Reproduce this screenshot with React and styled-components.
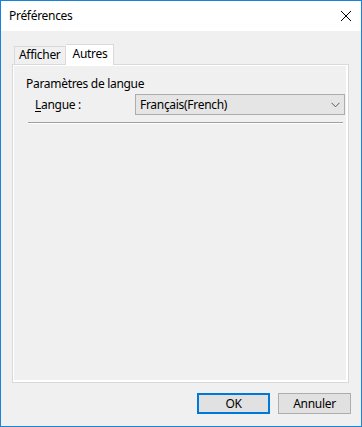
import React from "react";
import styled, { createGlobalStyle, css } from "styled-components";

const GlobalStyle = createGlobalStyle`
  html, body {
    margin: 0;
    padding: 0;
    background: #ffffff;
  }
  body {
    font-family: "Noto Sans", "Open Sans", sans-serif;
    font-size: 12px;
    letter-spacing: -0.3px;
    color: #000000;
  }
  * {
    box-sizing: border-box;
  }
`;

const Window = styled.div`
  width: 362px;
  height: 427px;
  display: flex;
  flex-direction: column;
  border: 1px solid #1883d7;
  background: #f0f0f0;
`;

const TitleBar = styled.div`
  height: 30px;
  flex: none;
  display: flex;
  align-items: center;
  justify-content: space-between;
  padding: 0 9px 1px 8px;
  background: #ffffff;
`;

const Title = styled.span`
  font-size: 12px;
  line-height: 16px;
`;

const CloseButton = styled.span`
  display: flex;
  width: 12px;
  height: 12px;
  margin-top: 1px;
`;

const Body = styled.div`
  flex: 1;
  display: flex;
  flex-direction: column;
  padding: 13px 12px 12px 11px;
`;

const TabStrip = styled.div`
  display: flex;
  align-items: flex-end;
  height: 20px;
  padding-left: 2px;
  position: relative;
  z-index: 1;
`;

const Tab = styled.div`
  height: 18px;
  padding: 0 4px;
  line-height: 16px;
  border: 1px solid #d9d9d9;
  border-bottom: none;
  background: #f0f0f0;
  ${(props) =>
    props.active &&
    css`
      height: 21px;
      margin-bottom: -1px;
      padding: 1px 6px 0 7px;
      background: #ffffff;
      border-color: #d9d9d9;
      border-left: none;
    `}
`;

const Panel = styled.div`
  flex: 1;
  display: flex;
  flex-direction: column;
  padding: 11px 2px 0 13px;
  border: 1px solid #d9d9d9;
  box-shadow: inset 1px 1px 0 #ffffff, inset -2px -2px 0 #ffffff;
`;

const GroupLabel = styled.div`
  line-height: 16px;
  height: 17px;
`;

const Row = styled.div`
  display: flex;
  align-items: center;
  height: 21px;
  margin-top: 1px;
`;

const FieldLabel = styled.label`
  width: 109px;
  flex: none;
  padding-left: 9px;
  line-height: 16px;
  u {
    text-decoration: underline;
    text-underline-offset: 2px;
  }
`;

const Select = styled.div`
  width: 210px;
  flex: none;
  height: 21px;
  display: flex;
  align-items: center;
  justify-content: space-between;
  padding: 0 4px 0 4px;
  border: 1px solid #adadad;
  background: #e5e5e5;
  line-height: 16px;
`;

const Separator = styled.div`
  height: 2px;
  margin: 7px 3px 0 2px;
  border-top: 1px solid #a0a0a0;
  border-bottom: 1px solid #ffffff;
`;

const Footer = styled.div`
  display: flex;
  justify-content: flex-end;
  gap: 8px;
  margin: 10px -2px 0 0;
`;

const Button = styled.button`
  width: 73px;
  height: 21px;
  padding: 0;
  font-family: inherit;
  font-size: 12px;
  letter-spacing: inherit;
  color: #000000;
  background: #e1e1e1;
  border: 1px solid #adadad;
  ${(props) =>
    props.primary &&
    css`
      border: 2px solid #0078d7;
    `}
`;

const Chevron = () => (
  <svg width="9" height="6" viewBox="0 0 9 6">
    <path d="M0.5 0.8 L4.5 4.8 L8.5 0.8" fill="none" stroke="#5a5a5a" strokeWidth="1" />
  </svg>
);

const CloseIcon = () => (
  <svg width="12" height="12" viewBox="0 0 12 12">
    <path d="M1 1 L11 11 M11 1 L1 11" stroke="#000000" strokeWidth="1" />
  </svg>
);

const App = () => (
  <>
    <GlobalStyle />
    <Window>
      <TitleBar>
        <Title>Préférences</Title>
        <CloseButton>
          <CloseIcon />
        </CloseButton>
      </TitleBar>
      <Body>
        <TabStrip>
          <Tab>Afficher</Tab>
          <Tab active>Autres</Tab>
        </TabStrip>
        <Panel>
          <GroupLabel>Paramètres de langue</GroupLabel>
          <Row>
            <FieldLabel>
              <u>L</u>angue :
            </FieldLabel>
            <Select>
              <span>Français(French)</span>
              <Chevron />
            </Select>
          </Row>
          <Separator />
        </Panel>
        <Footer>
          <Button primary>OK</Button>
          <Button>Annuler</Button>
        </Footer>
      </Body>
    </Window>
  </>
);

export default App;
